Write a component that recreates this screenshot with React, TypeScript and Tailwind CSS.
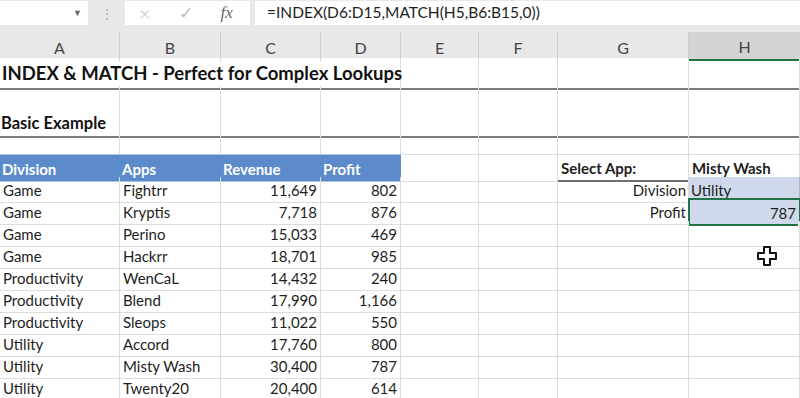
import React from 'react';
import { twMerge } from 'tailwind-merge';

const GRID = 'grid grid-cols-[120px_101px_100px_80px_78px_79px_131px_111px]';

const rows = [
  ['Game', 'Fightrr', '11,649', '802'],
  ['Game', 'Kryptis', '7,718', '876'],
  ['Game', 'Perino', '15,033', '469'],
  ['Game', 'Hackrr', '18,701', '985'],
  ['Productivity', 'WenCaL', '14,432', '240'],
  ['Productivity', 'Blend', '17,990', '1,166'],
  ['Productivity', 'Sleops', '11,022', '550'],
  ['Utility', 'Accord', '17,760', '800'],
  ['Utility', 'Misty Wash', '30,400', '787'],
  ['Utility', 'Twenty20', '20,400', '614'],
];

const Cell: React.FC<{ className?: string; children?: React.ReactNode }> = ({ className, children }) => (
  <div
    className={twMerge(
      'relative flex items-center pt-[2px] border-r border-b border-[#dcdcdc] px-[3px] whitespace-nowrap text-[15px] text-[#1e1e1e]',
      className
    )}
  >
    {children}
  </div>
);

const Cursor = () => (
  <svg width="22" height="22" viewBox="0 0 22 22" className="absolute left-[67px] top-[2px]">
    <path
      d="M8 2 h6 v6 h6 v6 h-6 v6 h-6 v-6 h-6 v-6 h6 z"
      fill="#fff"
      stroke="#111"
      strokeWidth="2"
      strokeLinejoin="round"
    />
  </svg>
);

export default function App() {
  return (
    <div className="w-[800px] h-[398px] overflow-hidden bg-white font-['Lato','Open_Sans',sans-serif]">
      {/* formula bar */}
      <div className="h-[32px] bg-[#e8e8e8] flex items-start pt-[1px]">
        <div className="w-[88px] h-[24px] bg-white flex items-center justify-end pr-[6px]">
          <span className="text-[9px] text-[#666]">▼</span>
        </div>
        <div className="w-[37px] h-[24px] flex items-center justify-center text-[#b5b5b5] text-[14px]">⋮</div>
        <div className="w-[125px] h-[24px] bg-white flex items-center text-[#bdbdbd]">
          <span className="ml-[14px] text-[20px] font-light">×</span>
          <span className="ml-[28px] text-[17px]">✓</span>
          <span className="ml-[28px] text-[17px] italic font-['Liberation_Serif',serif] text-[#666]">fx</span>
        </div>
        <div className="ml-[5px] flex-1 h-[24px] bg-white flex items-center pl-[12px] text-[15.5px] text-[#1e1e1e]">
          =INDEX(D6:D15,MATCH(H5,B6:B15,0))
        </div>
      </div>

      {/* column headers */}
      <div className={`${GRID} h-[26px] bg-[#e8e8e8]`}>
        {['A', 'B', 'C', 'D', 'E', 'F', 'G'].map((l) => (
          <div key={l} className="flex items-center justify-center pt-[3px] border-r border-[#cfcfcf] text-[16px] text-[#444]">
            {l}
          </div>
        ))}
        <div className="flex items-center justify-center pt-[3px] bg-[#d4d4d4] border-b-2 border-[#217346] text-[16px] text-[#444]">H</div>
      </div>

      {/* title */}
      <div className={`${GRID} h-[28px]`}>
        <Cell className="col-span-4 border-b-2 border-b-[#7a7a7a] font-bold text-[18.5px] text-[#111] px-[2px]">
          INDEX &amp; MATCH - Perfect for Complex Lookups
        </Cell>
        {[0, 1, 2, 3].map((i) => (
          <Cell key={i} className="border-b-2 border-b-[#7a7a7a]" />
        ))}
      </div>

      <div className={`${GRID} h-[23px]`}>
        {Array.from({ length: 8 }).map((_, i) => (
          <Cell key={i} className="border-b-0" />
        ))}
      </div>

      <div className={`${GRID} h-[23px]`}>
        <Cell className="border-b-2 border-b-[#7a7a7a] font-bold text-[16.5px] text-[#111] px-[1px]">Basic Example</Cell>
        {Array.from({ length: 7 }).map((_, i) => (
          <Cell key={i} className="border-b-2 border-b-[#7a7a7a]" />
        ))}
      </div>

      <div className={`${GRID} h-[23px]`}>
        {Array.from({ length: 8 }).map((_, i) => (
          <Cell key={i} className={i < 4 ? 'border-b-[#a9c1e6]' : ''} />
        ))}
      </div>

      {/* table header row */}
      <div className={`${GRID} h-[22px]`}>
        {['Division', 'Apps', 'Revenue', 'Profit'].map((h) => (
          <Cell key={h} className="bg-[#5b8bcb] border-r-0 border-b-[#a9c1e6] text-white font-bold px-[2px]">
            {h}
          </Cell>
        ))}
        <Cell />
        <Cell />
        <Cell className="border-b-2 border-b-[#6f6f6f] font-bold">Select App:</Cell>
        <Cell className="border-b-2 border-b-[#6f6f6f] font-bold">Misty Wash</Cell>
      </div>

      {rows.map((r, i) => (
        <div key={i} className={`${GRID} h-[22px]`}>
          <Cell>{r[0]}</Cell>
          <Cell>{r[1]}</Cell>
          <Cell className="justify-end">{r[2]}</Cell>
          <Cell className="justify-end">{r[3]}</Cell>
          <Cell />
          <Cell />
          {i === 0 && (
            <>
              <Cell className="justify-end px-[2px]">Division</Cell>
              <Cell className="bg-[#d0d9ec] border-r-[#b5b5b5] px-[2px]">Utility</Cell>
            </>
          )}
          {i === 1 && (
            <>
              <Cell className="justify-end px-[2px]">Profit</Cell>
              <Cell className="bg-[#d0d9ec] justify-end border-0 outline-2 outline-[#217346] -outline-offset-1 pr-[4px]">
                787
                <span className="absolute right-[-4px] bottom-[-4px] w-[6px] h-[6px] bg-[#217346] border border-white" />
              </Cell>
            </>
          )}
          {i > 1 && (
            <>
              <Cell />
              <Cell>{i === 3 && <Cursor />}</Cell>
            </>
          )}
        </div>
      ))}
    </div>
  );
}
